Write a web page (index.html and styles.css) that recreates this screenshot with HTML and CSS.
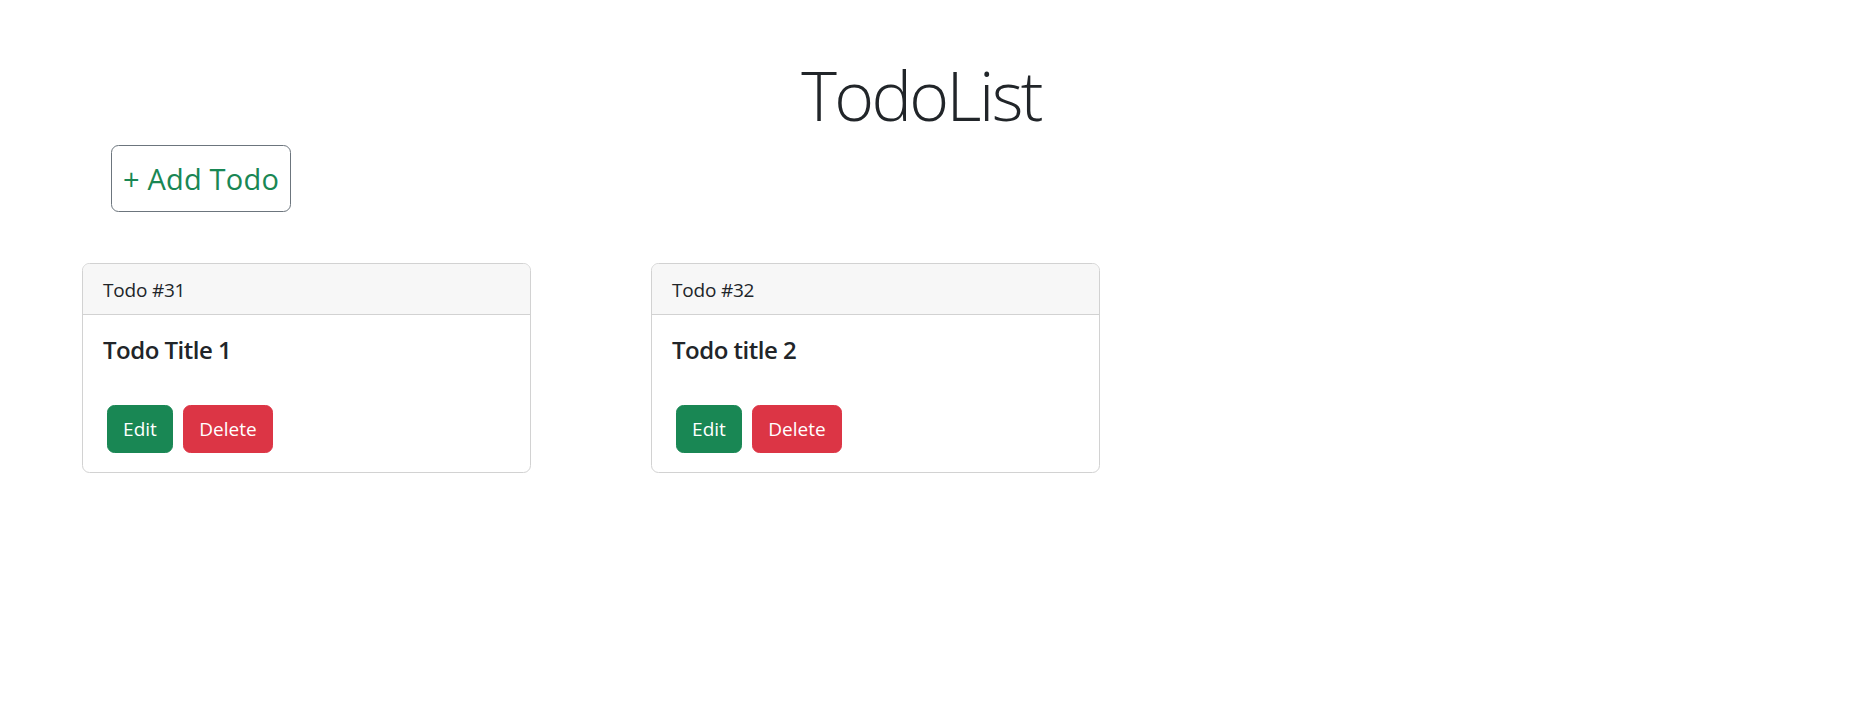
FILE: index.html
```html
<!DOCTYPE html>
<html lang="en">
<head>
<meta charset="utf-8">
<title>TodoList</title>
<link rel="stylesheet" href="styles.css">
</head>
<body>
  <header class="page-header">
    <h1 class="page-title">TodoList</h1>
  </header>
  <div class="toolbar">
    <button class="btn-add">+ Add Todo</button>
  </div>
  <main class="todo-list">
    <section class="card">
      <div class="card-header">Todo #31</div>
      <div class="card-body">
        <h5 class="card-title">Todo Title 1</h5>
        <div class="card-actions">
          <button class="btn btn-edit">Edit</button>
          <button class="btn btn-delete">Delete</button>
        </div>
      </div>
    </section>
    <section class="card">
      <div class="card-header">Todo #32</div>
      <div class="card-body">
        <h5 class="card-title">Todo title 2</h5>
        <div class="card-actions">
          <button class="btn btn-edit">Edit</button>
          <button class="btn btn-delete">Delete</button>
        </div>
      </div>
    </section>
  </main>
</body>
</html>
```
FILE: styles.css
```css
* { box-sizing: border-box; }

html, body {
  margin: 0;
  padding: 0;
  background: #fff;
}

body {
  font-family: "Open Sans", "Noto Sans", "Liberation Sans", sans-serif;
  font-size: 20px;
  line-height: 1.5;
  color: #212529;
}

.page-header {
  display: flex;
  justify-content: center;
  padding: 53px 29px 0 0;
}

.page-title {
  margin: 0;
  font-size: 68px;
  font-weight: 300;
  line-height: 83px;
  letter-spacing: -2.6px;
  color: #212529;
}

.toolbar {
  padding: 9px 0 0 111px;
}

.btn-add {
  font-family: inherit;
  font-size: 29px;
  line-height: 45px;
  padding: 10px 0;
  height: 67px;
  width: 180px;
  color: #198754;
  background: #fff;
  border: 1px solid #6c757d;
  border-radius: 7.5px;
  letter-spacing: 0.2px;
  white-space: nowrap;
  text-align: center;
  cursor: pointer;
}

.todo-list {
  display: flex;
  align-items: flex-start;
  padding: 51px 0 0 22px;
}

.card {
  width: 449px;
  margin: 0 60px;
  border: 1px solid #d2d2d2;
  border-radius: 7.5px;
  background: #fff;
  overflow: hidden;
}

.card-header {
  height: 51px;
  display: flex;
  align-items: center;
  padding: 2px 20px 0;
  background: #f7f7f7;
  border-bottom: 1px solid #d2d2d2;
  font-size: 19px;
  line-height: 30px;
  letter-spacing: -0.2px;
}

.card-body {
  padding: 20px 20px 19px;
}

.card-title {
  margin: 0;
  font-size: 24px;
  font-weight: 600;
  line-height: 30px;
  letter-spacing: -0.5px;
}

.card-actions {
  display: flex;
  gap: 10px;
  margin-top: 40px;
  padding-left: 4px;
}

.btn {
  font-family: inherit;
  font-size: 19px;
  line-height: 30px;
  height: 48px;
  padding: 8px 0;
  border: 1px solid transparent;
  border-radius: 7.5px;
  color: #fff;
  text-align: center;
  cursor: pointer;
}

.btn-edit {
  width: 66px;
  background: #198754;
  border-color: #198754;
}

.btn-delete {
  width: 90px;
  background: #dc3545;
  border-color: #dc3545;
}
```
